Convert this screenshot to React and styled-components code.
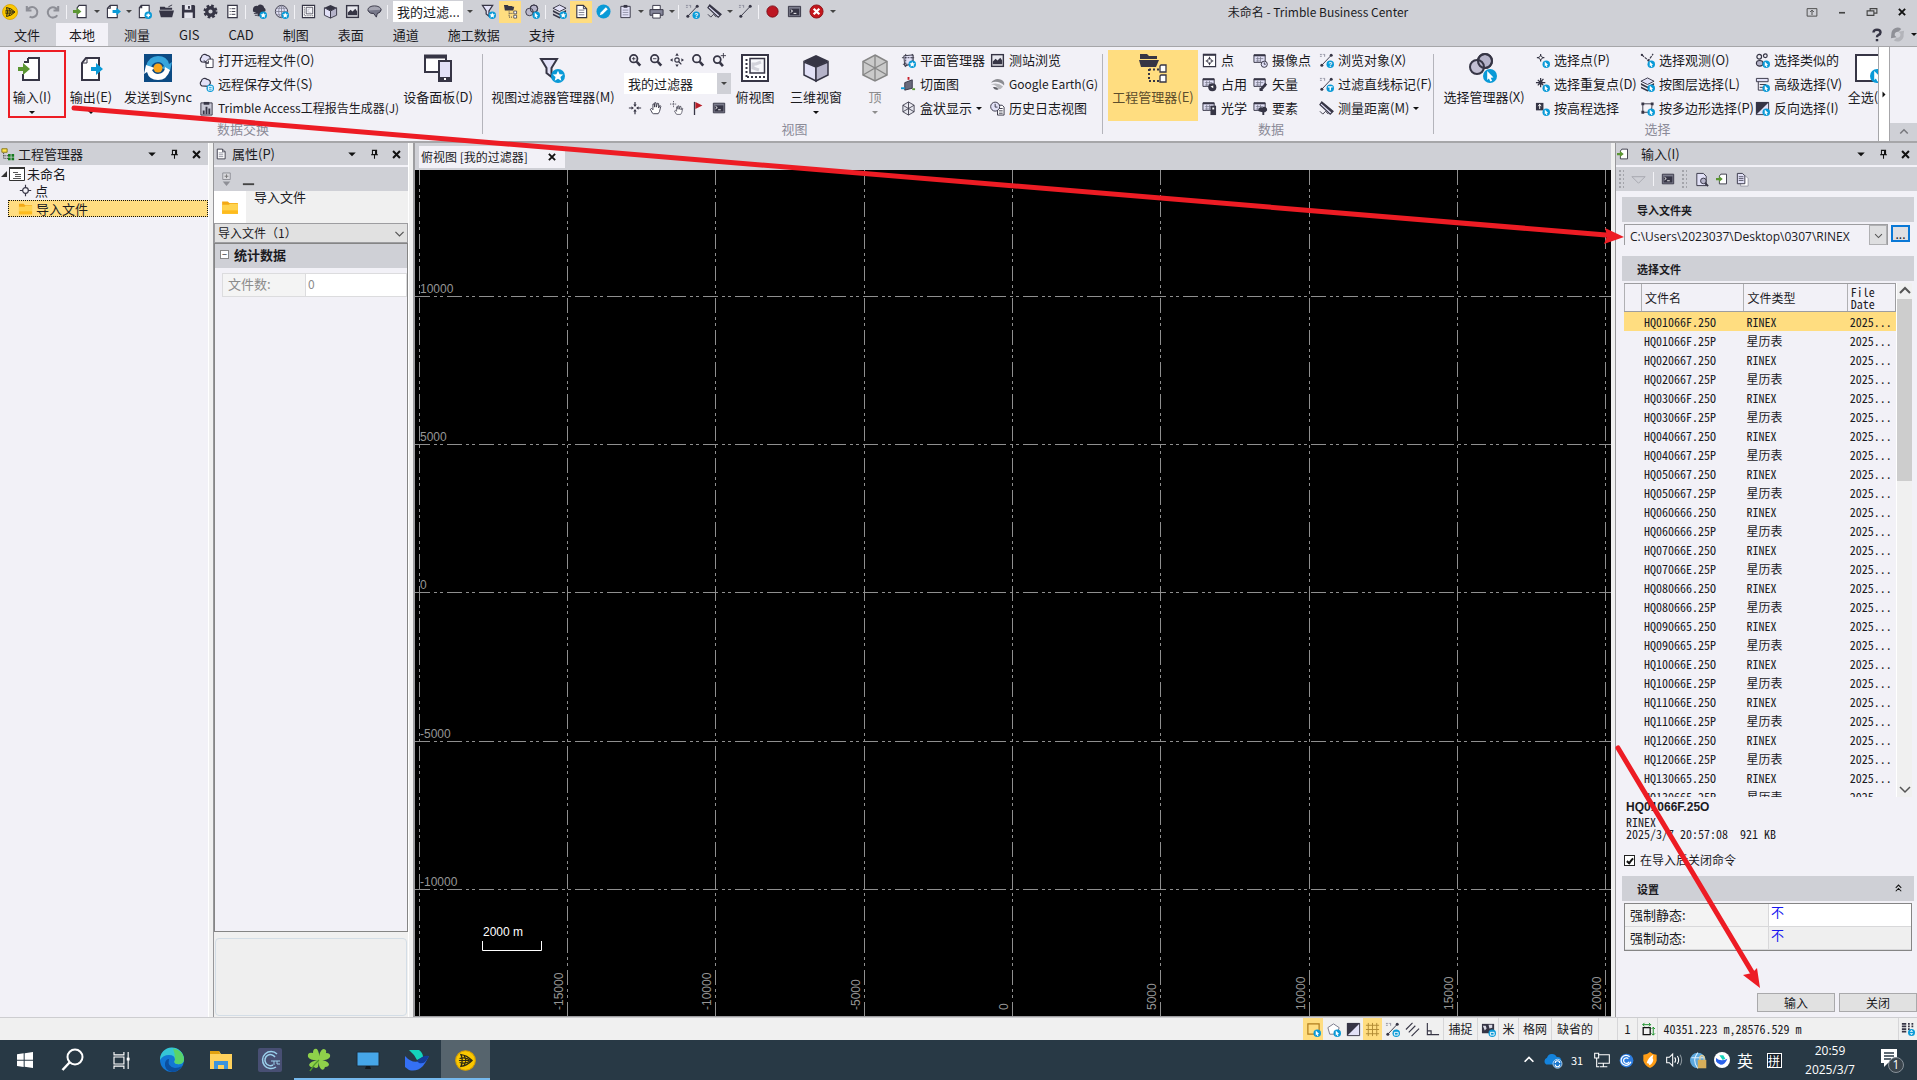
import React from "react";
import styled, { createGlobalStyle, css } from "styled-components";

const ui = `"Noto Sans CJK SC", "Noto Sans", sans-serif`;
const latin = `"Open Sans", "Noto Sans CJK SC", sans-serif`;
const mono = `"Noto Sans Mono CJK SC", "Liberation Mono", monospace`;
const D = "#363545";
const B = "#0a9ad7";
const L = "#e2e1f7";
const chrome = "#cfd0d6";
const pane = "#f2f1f7";

const Global = createGlobalStyle`
  *, *::before, *::after { box-sizing: border-box; }
  body { margin: 0; overflow: hidden; }
  button, input, select { font: inherit; color: inherit; margin: 0; }
  button { background: none; border: 0; padding: 0; }
`;

/* ---------- icons ---------- */

const Star = ({ x = 12, y = 12, r = 4 }) => (
  <g transform={`translate(${x} ${y}) scale(${r / 4})`}>
    <circle r="4" fill={B} />
    <path d="M0-3 .9-1 3-.8 1.4.6 1.9 2.7 0 1.6-1.9 2.7-1.4.6-3-.8-.9-1Z" fill="#fff" />
  </g>
);
const Cur = ({ x = 12, y = 12, r = 4 }) => (
  <g transform={`translate(${x} ${y}) scale(${r / 4})`}>
    <circle r="4" fill={B} />
    <path d="M-1.6-2.9 2 .8.4 1 1.2 2.7.2 3.1-.6 1.4-1.6 2.3Z" fill="#fff" />
  </g>
);
const Dot = ({ x = 12, y = 12, children }) => (
  <g transform={`translate(${x} ${y})`}>
    <circle r="4" fill={B} />
    {children || <path d="M-2 0H2M0-2V2" stroke="#fff" strokeWidth="1.4" />}
  </g>
);
const page = <path d="M4.500 1.500H13V14.500H2.500V4ZM5 1.500V4H2.500" fill="#fff" stroke={D} strokeWidth="1.200" />;
const box = (
  <>
    <path d="M8 1 14.500 4 8 7.500 1.500 4Z" fill={D} />
    <path d="M1.500 4 8 7.500V15L1.500 12Z" fill={L} stroke={D} />
    <path d="M14.500 4 8 7.500V15L14.500 12Z" fill="#b5b3c9" stroke={D} />
  </>
);
const lens = (
  <>
    <circle cx="6.500" cy="6.500" r="4.300" fill="none" stroke={D} strokeWidth="2" />
    <path d="m10 10 4 4.500" stroke={D} strokeWidth="3" />
  </>
);
const folderGold = (
  <>
    <path d="M1 3H6L7.500 4.500H15V14H1Z" fill="#f3a915" />
    <path d="M1 6H7L8 5H15V14H1Z" fill="#ffd34f" />
    <path d="M1 11H15V14H1Z" fill="#fdbb1e" />
  </>
);
const tableBit = (
  <>
    <path d="M1 2H13V10H1Z" fill={L} stroke={D} />
    <path d="M1 2.500H13" stroke={D} strokeWidth="2" />
    <path d="M3 6H11M3 8.500H8M5 4V10M8 4V10" stroke="#77788a" strokeWidth=".8" />
  </>
);
const tagLine = (
  <>
    <path d="M1 1.500H3M4 1.500H5M6 1V4M1 3.500H3" stroke="#77788a" strokeWidth=".8" />
    <path d="M3 13 12.500 3" stroke={D} strokeWidth="1" />
    <circle cx="3" cy="13" r="1.600" fill={D} />
    <circle cx="13" cy="2.500" r="1.600" fill={D} />
  </>
);
const shelf = (
  <>
    <path d="M8 1 15 4.500 8 8 1 4.500Z" fill={L} stroke={D} />
    <path d="M1 6.500 8 10 15 6.500V8.500L8 12 1 8.500Z M1 10 8 13.500 15 10V12L8 15.500 1 12Z" fill={D} />
  </>
);
const cloud = <path d="M3 9.500A3 3 0 0 1 2.500 4.500 3.500 3.500 0 0 1 8.500 2.500 3.500 3.500 0 0 1 12 7L10 10Z" fill={L} stroke={D} strokeWidth="1.300" />;
const measure = (
  <>
    <path d="M3 1 15 11 12 14 1 4Z" fill={L} stroke={D} strokeWidth="1.300" />
    <path d="M3 1 15 11 13.500 12.500 2 2.500Z" fill={D} />
    <path d="M1 11 4 14 7 11 10 14" fill="none" stroke={D} />
  </>
);
const term = (
  <>
    <path d="M1.500 2.500H14.500V13.500H1.500Z" fill="#7b7c8c" stroke={D} />
    <path d="M3 5H13V12H3Z" fill={D} />
    <path d="m4 6 2 1.500L4 9M7 10H10" stroke="#fff" fill="none" />
  </>
);
const rings = (
  <>
    <circle cx="9.500" cy="5" r="4" fill="#b5b3c9" stroke={D} />
    <circle cx="4.800" cy="8.500" r="4" fill="#b5b3c9" fillOpacity=".8" stroke={D} />
    <circle cx="9.500" cy="5" r="4" fill="none" stroke={D} />
  </>
);
const funnel = <path d="M1.500 1.500H12.500L8.500 7.500V13L5.500 10.500V7.500Z" fill={L} stroke={D} strokeWidth="1.300" />;
const picture = (
  <>
    <path d="M1 1H15V15H1Z" fill={D} />
    <path d="M2.500 2.500H13.500V13.500H2.500Z" fill="#e8e8ef" />
    <path d="M3 12V9L6 6 8 8 11 5 13 8V12Z" fill={D} />
  </>
);
const globe = (
  <>
    <circle cx="8" cy="8" r="6.500" fill={L} stroke={D} />
    <path d="M8 1.500V14.500M1.500 8H14.500M3 4.500H13M3 11.500H13" stroke="#77788a" strokeWidth=".8" />
    <ellipse cx="8" cy="8" rx="3" ry="6.500" fill="none" stroke="#77788a" strokeWidth=".8" />
  </>
);
const planView = (
  <>
    <path d="M1.500 1.500H14.500V14.500H1.500Z" fill="#fff" stroke={D} strokeWidth="1.200" />
    <path d="M3.500 3V13M4 12.500H13" stroke={D} strokeDasharray="1 1" />
    <path d="M5.500 3.500H12.500V10.500H5.500Z" fill="#f4f4f8" stroke={D} strokeWidth=".8" />
    <path d="M10 5 7.500 6V8.500L10.500 9" fill="none" stroke="#c8c8d2" />
  </>
);
const hand = <path d="M4 14 1.500 9.500 3 8.500 4.500 10V3.500L6 3.300 6.500 7V2L8 2 8.500 7 9.500 2.500 11 3V8L12.500 5 13.500 6 12 12 10.500 14.500H5Z" fill="#fff" stroke={D} />;
const crossArrows = (
  <>
    <path d="M8 1V6M8 10V15M1 8H6M10 8H15" stroke={D} strokeWidth="1.400" />
    <path d="M6 4H10L8 6.500ZM6 12H10L8 9.500ZM4 6V10L6.500 8ZM12 6V10L9.500 8Z" fill={D} />
  </>
);
const target = (
  <>
    <circle cx="8" cy="8" r="3.500" fill="none" stroke={D} strokeWidth="1.400" />
    <path d="M8 1V5M8 11V15M1 8H5M11 8H15" stroke={D} strokeWidth="1.400" />
  </>
);
const logoDisc = (
  <>
    <circle cx="8" cy="8" r="7.500" fill="#fbc800" stroke="#d79f00" strokeWidth=".8" />
    <path d="M4.500 3.500Q9 4 13 8 9 12 4.500 12.500 6.500 8 4.500 3.500Z" fill="none" stroke="#2a2613" strokeWidth="1" />
    <path d="M3.500 6.500Q8 5 12 8 8 11 3.500 9.500M7 4.500Q9.500 8 7 11.500M3 8H11" fill="none" stroke="#2a2613" strokeWidth=".8" />
  </>
);
const invert = (
  <>
    <path d="M1.500 1.500H14.500V14.500H1.500Z" fill={L} stroke={D} />
    <path d="M1 1H15L1 15Z" fill={D} />
  </>
);
const importPage = (
  <>
    <path d="M6.500 1.500H14V14.500H4.500V4Z" fill="#fff" stroke={D} strokeWidth="1.200" />
    <path d="M0 6.500H4V4L9 8 4 12V9.500H0Z" fill="#5b9632" />
  </>
);

const shapes = {
  logo: logoDisc,
  undo: <path d="M3 2V7H8M3.500 7A5.500 5.500 0 1 1 6 13.500" fill="none" stroke="#8d8e96" strokeWidth="2.200" />,
  redo: <path d="M13 2V7H8M12.500 7A5.500 5.500 0 1 0 12 12" fill="none" stroke="#8d8e96" strokeWidth="2.200" />,
  importPage,
  exportPage: (
    <>
      <path d="M4.500 1.500H12V14.500H1.500V4.500ZM4.500 1.500V4.500H1.500" fill="#fff" stroke={D} strokeWidth="1.200" />
      <path d="M7 6.500H11V4L16 8 11 12V9.500H7Z" fill={B} />
    </>
  ),
  newPage: <>{page}<Dot /></>,
  open: <><path d="M1 3H6L7 4H14V6H1Z" fill={D} /><path d="M0 7H16L14 14H2Z" fill={D} /><path d="M10 3 14 1" stroke={D} /></>,
  save: <><path d="M1 1H14L15 2V15H1Z" fill={D} /><path d="M4 1H11V6H4ZM3.500 9H12.500V15H3.500Z" fill="#e6e6ee" /><path d="M8.500 2V5" stroke={D} strokeWidth="2" /></>,
  gear: <><circle cx="8" cy="8" r="6" fill="none" stroke={D} strokeWidth="3" strokeDasharray="2.700 2" /><circle cx="8" cy="8" r="4" fill="none" stroke={D} strokeWidth="3.500" /></>,
  sheet: <><path d="M3 1.500H13V14.500H3Z" fill="#fff" stroke={D} strokeWidth="1.300" /><path d="M5 5H6M7 5H11M5 8H6M7 8H11M5 11H6M7 11H11" stroke={D} /></>,
  treeStar: <><path d="M1 6A4 4 0 0 1 6 2 4 4 0 0 1 13 4 3 3 0 0 1 14 8L10 9V13H6V10L1 8Z" fill={D} /><path d="M2 10H6M3 12H6" stroke={D} /><Star /></>,
  globeStar: <>{globe}<Star /></>,
  planView,
  box,
  picture,
  layer3d: <><ellipse cx="8" cy="6" rx="7" ry="4" fill="#a5a5b2" stroke={D} /><path d="M1 7Q3 11 7 10L10 14 11 10Q14 10 15 6" fill="#77788a" stroke={D} /></>,
  funnelStar: <>{funnel}<Star /></>,
  manager: <><path d="M1 1H5L6 2H10V3H12L11 7H2Z" fill={D} /><path d="M6.500 8V14H10M7 10H10" fill="none" stroke={D} strokeDasharray="1 1" /><path d="M11.500 7.500H14.500V10.500H11.500ZM11.500 12H14.500V15H11.500Z" fill="#fff" stroke={D} strokeWidth=".8" /></>,
  ringsCur: <>{rings}<Cur /></>,
  layersStar: <>{shelf}<Star /></>,
  note: <><path d="M3 1.500H10L13.500 5V14.500H3Z" fill="#fff" stroke={D} strokeWidth="1.200" /><path d="M10 1.500V5H13.500" fill="none" stroke={D} /><path d="M5 6.500H11M5 9H11M5 11.500H11" fill="none" stroke="#77788a" /></>,
  pencil: <><circle cx="8" cy="8" r="7.500" fill={B} /><path d="M4 12 5 9 10.500 3.500 12.500 5.500 7 11Z" fill="#fff" /></>,
  clipboard: <><path d="M3 2.500H13V14.500H3Z" fill={L} stroke={D} /><path d="M6 1H10V4H6Z" fill={D} /><path d="M5 6.500H11M5 9H11M5 11.500H11" stroke="#8f90a5" /></>,
  printer: <><path d="M4 1.500H12V6H4Z" fill="#fff" stroke={D} /><path d="M1 6H15V12H1Z" fill="#85869a" stroke={D} /><path d="M4 10H12V15H4Z" fill="#fff" stroke={D} /></>,
  lineAsk: <>{tagLine}<Dot><text y="3" fontSize="7" fontWeight="700" fill="#fff" textAnchor="middle" fontFamily="Liberation Sans">?</text></Dot></>,
  lineFilter: <>{tagLine}<Dot><path d="M-2.500-1.500H2.500M0-1.500V2.500" stroke="#fff" strokeWidth="1.500" /></Dot></>,
  measure,
  lineOnly: <>{tagLine}</>,
  record: <circle cx="8" cy="8" r="6" fill="#bd1622" stroke="#7c0d16" />,
  term,
  stop: <><circle cx="8" cy="8" r="7" fill="#c4161c" stroke="#8e1015" /><path d="m5 5 6 6M11 5l-6 6" stroke="#fff" strokeWidth="2.400" /></>,
  cloudOpen: <>{cloud}<path d="M10 6.500H15V15.500H7.500V9Z" fill="#fff" stroke={D} /><path d="M5 8 10 11M10 8V11H7" fill="none" stroke={D} /></>,
  cloudSave: <>{cloud}<Dot><path d="M-2-2H2V2H-2ZM-2 0H2" fill="none" stroke="#fff" /></Dot></>,
  report: <><path d="M2 2H14V15H2Z" fill="#c9c9d6" stroke={D} /><path d="M5 1H11V4H5Z" fill={D} /><path d="M5 14V10M8 14V6M11 14V8" stroke={D} strokeWidth="2" /></>,
  zoomIn: <>{lens}<path d="M4.500 6.500H8.500M6.500 4.500V8.500" stroke={D} /></>,
  zoomOut: <>{lens}<path d="M4.500 6.500H8.500" stroke={D} /></>,
  extents: <><path d="M8 0 10 3H6ZM8 16 10 13H6ZM0 8 3 6V10ZM16 8 13 6V10Z" fill={D} /><circle cx="8" cy="8" r="2.500" fill="none" stroke={D} strokeWidth="1.300" /><path d="m10 10 3 3" stroke={D} strokeWidth="1.500" /></>,
  lens,
  lensPlus: <><circle cx="6" cy="7.500" r="4" fill="none" stroke={D} strokeWidth="2" /><path d="m9 11 3.500 4" stroke={D} strokeWidth="3" /><path d="M13 0V6M10 3H16" stroke={D} /></>,
  center: crossArrows,
  hand,
  handPlus: <><g transform="translate(4 4) scale(.78)">{hand}</g><path d="M4 0V7M0 3.500H8" stroke={D} strokeDasharray="1 1" /></>,
  flag: <><path d="M4 1V16" stroke={D} strokeWidth="1.500" /><path d="M5 1 13 5 5 9Z" fill="#b81e28" /></>,
  planeStar: <><path d="M3 3 13 2V11L4 14Z" fill={L} stroke={D} /><path d="M1 5H14M2 12H12M5 1V15M12 1V10" stroke={D} strokeDasharray="2 1" /><Star /></>,
  section: <><path d="M4 6 12 3V12L4 14Z" fill="#696a7b" stroke={D} /><path d="M8 0V3" stroke="#c8202c" strokeWidth="2" /><path d="M0 12H4" stroke={B} strokeWidth="2" /><path d="M12 13H15" stroke="#5b9632" strokeWidth="2" /></>,
  cube: <path d="M8 1 14 4.500V11.500L8 15 2 11.500V4.500ZM2 4.500 8 8 14 4.500M8 8V15M8 1V8M2 11.500 8 8 14 11.500" fill="#e6e6ee" stroke={D} strokeWidth=".9" />,
  earth: <><path d="M1 6Q6 0 12 3 16 5 15 9 9 3 1 6Z" fill="#8c8d92" /><path d="M1 8Q8 5 14 10 12 13 9 13 7 8 1 8Z" fill="#b7b8bc" /><path d="M3 11Q7 10 9 13 6 15 3 11Z" fill="#5c5d63" /></>,
  history: <><path d="M8 4.500H13L15 6.500V15H8Z" fill="#fff" stroke={D} /><path d="M9.500 8H13.500M9.500 10.500H13.500M9.500 13H13.500" stroke={D} /><circle cx="5.500" cy="6" r="4.800" fill={L} stroke={D} /><path d="M5.500 3V6.500H8" fill="none" stroke={D} /></>,
  point: <><path d="M1.500 1.500H14.500V14.500H1.500Z" fill="#fff" stroke={D} strokeWidth="1.200" /><path d="M1 2H15" stroke={D} strokeWidth="2" /><path d="M8 5 11 8.500 8 12 5 8.500Z" fill="none" stroke={D} /><path d="M8 4V7M8 10V13M4 8.500H7M9 8.500H12" stroke={D} /></>,
  occupy: <>{tableBit}<circle cx="11" cy="11" r="4.300" fill={D} /><path d="m9 10 3-1v3Z" fill="#fff" /></>,
  optic: <>{tableBit}<path d="M9 5H15V15H9Z" fill={D} /><path d="M11 7H13V9H11Z" fill="#fff" /></>,
  camera: <>{tableBit}<circle cx="12" cy="12" r="3.300" fill={L} stroke={D} /><path d="M12 10V12H13.500" fill="none" stroke={D} /></>,
  vector: <>{tableBit}<path d="M8 14 14 7" stroke={D} strokeWidth="3" /><path d="M7 15V11L11 15Z" fill={D} /></>,
  feature: <>{tableBit}<path d="M6 11A3 3 0 0 1 10 7 3 3 0 0 1 15 10L13 12H12V15H10V12Z" fill={D} /></>,
  selPoint: <><path d="M6 1V9M2 5H10" stroke={D} strokeWidth="1.300" /><circle cx="6" cy="5" r="1.800" fill="#fff" stroke={D} /><Cur /></>,
  selDup: <><path d="M6 1V11M1 6H11M3 3 9 9M9 2 3 9" stroke={D} strokeWidth="1.300" /><circle cx="6" cy="6" r="2.200" fill={D} /><Cur /></>,
  selElev: <><path d="M1 2H9V10H1Z" fill={D} /><path d="M5 3.500V8.500M3.500 5.500 5 3.500 6.500 5.500" fill="none" stroke="#fff" /><Cur /></>,
  selObs: <><path d="M2 2 9 8 14 1" fill="none" stroke={D} strokeWidth="1.200" strokeDasharray="3 1" /><circle cx="2" cy="2" r="1.200" fill={D} /><circle cx="9" cy="8" r="1.200" fill={D} /><Cur /></>,
  selLayer: <>{shelf}<Cur /></>,
  selPoly: <><path d="M3 3H13L12 12H3Z" fill="none" stroke={D} /><path d="M1.500 1.500H4.500V4.500H1.500ZM11.500 1.500H14.500V4.500H11.500ZM1.500 10.500H4.500V13.500H1.500Z" fill={D} /><Cur /></>,
  selSame: <><circle cx="4.500" cy="4" r="2.500" fill="none" stroke={D} strokeWidth="1.300" /><circle cx="11" cy="3" r="2" fill="none" stroke={D} strokeWidth="1.300" /><ellipse cx="5" cy="11" rx="3.500" ry="3" fill="#b5b3c9" stroke={D} strokeWidth="1.300" /><Cur /></>,
  selAdv: <><path d="M1.500 1.500H14V5H1.500Z" fill={L} stroke={D} /><path d="M3.500 5V14H10M5 8H12M5 11H9" fill="none" stroke={D} /><Cur /></>,
  selInv: <>{invert}<Cur /></>,
  invert,
  gold: folderGold,
  projectTree: <><path d="M1 2H7V6H1Z" fill="#ffe34d" stroke="#80700c" /><path d="M3 7V13H8M3 10H8" fill="none" stroke="#222" strokeDasharray="1 1" /><path d="M8 8H11V11H8ZM12 8H15V11H12ZM8 12H11V15H8ZM12 12H15V15H12Z" fill="#157a1c" /></>,
  listBox: <><path d="M.5 1.500H15.500V14.500H.5Z" fill="#fff" stroke="#333" /><path d="M0 2H16" stroke="#333" strokeWidth="2" /><path d="M4 6.500H9M6 8.500H12M6 10.500H12M4 12.500H12" stroke="#555" /></>,
  target,
  pin: <path d="M5 2H11V8H5ZM9.500 2V8M3 8.500H13M8 9V14" fill="none" stroke="#111" strokeWidth="1.500" />,
  close: <path d="m3 3 10 10M13 3 3 13" stroke="#111" strokeWidth="3" />,
  down: <path d="M3 6H13L8 11Z" fill="#111" />,
  chevDown: <path d="m3 6 5 5 5-5" fill="none" stroke="#555" strokeWidth="1.500" />,
  chevUp: <path d="m3 10 5-5 5 5" fill="none" stroke="currentColor" strokeWidth="2" />,
  twoUp: <path d="m4 7 4-4 4 4M4 12l4-4 4 4" fill="none" stroke="#111" strokeWidth="1.500" />,
  filterGhost: <path d="M1 5H15L8 12Z" fill="none" stroke="#a5a6ae" />,
  pageLens: <><path d="M3 1.500H10L13 4.500V14.500H3Z" fill={L} stroke={D} /><circle cx="10" cy="9.500" r="3" fill="#b5b3c9" stroke={D} /><path d="m12 12 3 3" stroke={D} strokeWidth="2" /></>,
  copy: <><path d="M6 4H11L14 7V15H6Z" fill="#fff" stroke="#9a9ba8" /><path d="M2.500 1.500H8L10.500 4V12.500H2.500Z" fill={L} stroke={D} /><path d="M4 5H9M4 7H9M4 9H9" stroke={D} strokeWidth=".8" /></>,
  restoreUp: <><path d="M1.500 3.500H14.500V13.500H1.500Z" fill="none" stroke="#444" strokeWidth="1.200" /><path d="M8 12V6M5.500 8 8 5.500 10.500 8" fill="none" stroke="#444" strokeWidth="1.200" /></>,
  minimize: <path d="M4 9H12" stroke="#444" strokeWidth="2.200" />,
  dash: <path d="M2 13H14" stroke="#444" strokeWidth="2" />,
  restore: <path d="M5.500 6V3.500H14.500V9.500H11M1.500 6.500H10.500V12.500H1.500Z" fill="none" stroke="#444" strokeWidth="1.500" />,
  help: <path d="M4 5Q4 2 8 2T12 5Q12 7 9.500 8 8 8.700 8 10.500M8 12.500V15" fill="none" stroke={D} strokeWidth="2.800" />,
  sync: <><path d="M1.500 7A6.500 6.500 0 0 1 12 2L9 5A3.500 3.500 0 0 0 5 9L7 11 1 12Z" fill="#8f9097" /><path d="M14.500 8A6.500 6.500 0 0 1 4 14L7 11.500A3.500 3.500 0 0 0 11 7L9 5 15 4Z" fill="#b3b4ba" /></>,
  snapBox: <><path d="M2 2H14V13H2Z" fill="none" stroke="#b07d1e" strokeWidth="1.300" /><Cur /></>,
  snapPoly: <><path d="M8 2 14 6 12 13H4L2 6Z" fill="#fff" stroke="#77788a" /><Cur /></>,
  grid: <path d="M1 3.500H15M1 8H15M1 12.500H15M3.500 1V15M8 1V15M12.500 1V15" stroke="#b08a33" strokeWidth="1" />,
  lineEye: <>{tagLine}<Dot><path d="M-2-1H2V2H-2Z" fill="none" stroke="#fff" /></Dot></>,
  slopes: <path d="M1 8 8 1M7 15 15 7M4 11 11 4" stroke={D} strokeWidth="1.200" />,
  ortho: <path d="M2.500 1V13.500H15M2.500 9.500H6.500V13.500" fill="none" stroke={D} strokeWidth="1.200" />,
  world: <><path d="M1 2H14V12H1Z" fill={D} /><path d="M2 4 5 4 6 7 4 9ZM8 3H12V6L9 7Z" fill="#d9d9e4" /><Dot><path d="M-2-1H2V2H-2Z" fill="none" stroke="#fff" /></Dot></>,
  boxDims: <><path d="M2.500 6.500H10.500V14.500H2.500Z" fill="none" stroke="#111" strokeWidth="1.500" /><path d="M2 3H11M4 1 2 3 4 5M9 1 11 3 9 5M14 6V15M12 8 14 6 16 8M12 13 14 15 16 13" fill="none" stroke="#0b8a1c" /></>,
  listGear: <><path d="M1 2H6M1 5H6M1 8H6M1 11H6M8 2H10M8 5H10M12 2H14M12 5H14M8 8H10" stroke={D} strokeWidth="2" /><Dot><path d="M-2-.8 0-2.800 2-.8ZM-2 .8 0 2.800 2 .8Z" fill="#fff" /></Dot></>,
  toggle: <><path d="M4 1H12V8H4Z" fill="#d8d8dc" stroke="#8e8f96" /><path d="M8 2.500V6.500M6 4.500H10" stroke="#777" /><path d="M4 10H12L8 15Z" fill="#8e8f96" /></>,
};

const large = {
  importPage: <><path d="M11.500 3H21V26.500H5.500V9" fill="#fff" /><path d="M10 4H21V26H5V20M10 4V8H6" fill="none" stroke={D} strokeWidth="2" /><path d="M0 13H5V9L12 15 5 21V17H0Z" fill="#5b9632" /></>,
  exportPage: <><path d="M9 4H22V26H5V9Z" fill="#fff" stroke={D} strokeWidth="2" /><path d="M10 4V9H5" fill="none" stroke={D} /><path d="M14 13H19V9L26 15 19 21V17H14Z" fill={B} /></>,
  syncBig: <><path d="M0 0H28V28H0Z" fill="#0c4a83" /><path d="M2 12Q5 2 14 2 23 2 25 10L28 8 26 17 17 14 20 12Q18 8 14 8 7 9 7 15Z" fill="#37a5dc" /><path d="M26 16Q23 26 14 26 5 26 3 18L0 20 2 11 11 14 8 16Q10 20 14 20 21 19 21 13Z" fill="#fff" /><circle cx="14" cy="14" r="4.500" fill="#f7a51c" /></>,
  devices: <><path d="M1 3H22V18H1Z" fill="#fff" stroke={D} strokeWidth="2" /><path d="M0 2.500H23" stroke={D} strokeWidth="4" /><path d="M15 7H27V27H15Z" fill={L} stroke={D} strokeWidth="2" /><path d="M15 25H27" stroke={D} strokeWidth="4" /><path d="M20 25H22" stroke="#fff" strokeWidth="2" /></>,
  funnelBig: <><path d="M2 5H18L12.500 14V23L7.500 19V14Z" fill={L} stroke={D} strokeWidth="2" /><Star x={19} y={22} r={7} /></>,
  planBig: <><path d="M1 1H27V27H1Z" fill="#fff" stroke={D} strokeWidth="2" /><path d="M5.500 5V24M6 23H24" stroke={D} strokeWidth="2" strokeDasharray="2 2" /><path d="M9 4.500H23.500V19H9Z" fill="#f7f7fb" stroke={D} strokeWidth="1.500" /><path d="M20 8 15 10H12V14L18 16" fill="none" stroke="#d2d2da" strokeWidth="3" /></>,
  boxBig: <><path d="M14 1 27 7 14 13 1 7Z" fill={D} /><path d="M2 8 14 13V27L2 21Z" fill={L} stroke={D} strokeWidth="1.500" /><path d="M26 8 14 13V27L26 21Z" fill="#b5b3c9" stroke={D} strokeWidth="1.500" /></>,
  cubeBig: <><path d="M14 1 26 7.500V21L14 27 2 21V7.500Z" fill="#cacaca" stroke="#868686" strokeWidth="1.500" /><path d="M2 7.500 14 14 26 7.500M14 14V27M14 1V14M2 21 14 14 26 21" fill="none" stroke="#868686" strokeWidth="1.300" /></>,
  managerBig: <><path d="M1 0H8L10 2H18V5H1Z" fill={D} /><path d="M0 6H20L17 13H2Z" fill={D} /><path d="M10 15.500H20M10 15V27H20" fill="none" stroke={D} strokeWidth="2" strokeDasharray="2 2" /><path d="M22 11H27V18H21V12ZM22 21H27V28H21V22Z" fill="#fff" stroke={D} strokeWidth="1.300" /></>,
  ringsBig: <><circle cx="15" cy="7" r="7" fill="#b5b3c9" stroke={D} strokeWidth="2" /><circle cx="7" cy="13" r="7" fill="#b5b3c9" fillOpacity=".8" stroke={D} strokeWidth="2" /><circle cx="15" cy="7" r="7" fill="none" stroke={D} strokeWidth="2" /><Cur x={20} y={22} r={7} /></>,
  allBig: <><path d="M1 1H29V27H1Z" fill="#fff" stroke={D} strokeWidth="2" /><Cur x={22} y={22} r={7} /></>,
};

const Svg = styled.svg`
  display: block;
  flex: none;
  overflow: visible;
`;
const Icon = ({ n, s = 15 }) => <Svg width={s} height={s} viewBox="0 0 16 16" aria-hidden="true">{shapes[n]}</Svg>;
const BigIcon = ({ n }) => <Svg width="28" height="28" viewBox="0 0 28 28" aria-hidden="true">{large[n]}</Svg>;
const Caret = styled.span`
  width: 0;
  height: 0;
  border: 3px solid transparent;
  border-top-color: ${(p) => p.$c || "#111"};
  border-bottom-width: 0;
  flex: none;
`;

/* ---------- window frame ---------- */

const Window = styled.div`
  position: relative;
  height: 100vh;
  display: flex;
  flex-direction: column;
  overflow: hidden;
  background: ${chrome};
  color: #1b1b1f;
  font: 13px/16px ${ui};
  white-space: nowrap;
`;
const TitleBar = styled.header`
  height: 23px;
  display: flex;
  align-items: center;
`;
const ToolButton = styled.button`
  width: ${(p) => p.$w || 22}px;
  height: 22px;
  flex: none;
  display: grid;
  place-items: center;
  background: ${(p) => (p.$on ? "#ffdd80" : "none")};
`;
const ToolGap = styled.span`
  flex: none;
  width: 1px;
  height: 14px;
  margin: 0 2px;
  background: #f2f2f6;
`;
const TopSelect = styled.select`
  width: 70px;
  height: 21px;
  margin-left: 3px;
  padding: 0 4px;
  border: 0;
  appearance: none;
  background: #fff;
`;
const Title = styled.h1`
  flex: 1;
  margin: 0;
  text-align: center;
  font: 12px/16px ${ui};
`;
const TabBar = styled.nav`
  height: 23px;
  display: flex;
  gap: 3px;
  padding-left: 1px;
`;
const Tab = styled.button`
  padding: 0 13px;
  background: ${(p) => (p.$on ? pane : "none")};
`;
const TabEnd = styled.div`
  margin-left: auto;
  display: flex;
  align-items: center;
  gap: 6px;
`;

/* ---------- ribbon ---------- */

const Ribbon = styled.section`
  height: 97px;
  display: flex;
  border-top: 1px solid #a6a6a9;
  border-bottom: 2px solid #a6a6a9;
  background: ${pane};
`;
const Group = styled.div`
  position: relative;
  flex: ${(p) => (p.$w ? `0 0 ${p.$w}px` : "1 1 0")};
  min-width: 0;
  padding: 3px 0 0 ${(p) => p.$pad || 3}px;
  overflow: hidden;
  &::after {
    content: "";
    position: absolute;
    right: 0;
    top: 7px;
    height: 80px;
    border-right: ${(p) => (p.$last ? 0 : 1)}px solid #b4b4bb;
  }
`;
const GroupRow = styled.div`
  height: 71px;
  display: flex;
`;
const GroupName = styled.div`
  text-align: center;
  color: #8b8b98;
`;
const Big = styled.button`
  flex: none;
  width: ${(p) => p.$w}px;
  height: 71px;
  padding-top: 4px;
  display: flex;
  flex-direction: column;
  align-items: center;
  gap: 7px;
  background: ${(p) => (p.$on ? "#ffdd80" : "none")};
  color: ${(p) => (p.$dim ? "#8d8d8d" : p.$on ? "#5c4d2c" : "inherit")};
  ${Caret} { margin-top: -1px; }
`;
const Stack = styled.div`
  flex: none;
  width: ${(p) => p.$w}px;
  margin-top: -2px;
  padding-left: 4px;
  display: grid;
  grid-template-rows: repeat(3, 24px);
`;
const Small = styled.button`
  display: flex;
  align-items: center;
  gap: 4px;
  text-align: left;
  font-size: ${(p) => (p.$latin ? 12 : 13)}px;
`;
const IconLine = styled.div`
  display: flex;
  align-items: center;
`;
const Combo = styled.div`
  width: 107px;
  height: 21px;
  margin-top: 1px;
  display: flex;
  align-items: center;
  background: #fff;
  select {
    flex: 1;
    width: 90px;
    height: 21px;
    padding: 0 4px;
    border: 0;
    appearance: none;
    background: transparent;
  }
  span.end {
    width: 14px;
    height: 21px;
    display: grid;
    place-items: center;
    background: ${chrome};
  }
`;
const Scroller = styled.button`
  width: 12px;
  display: grid;
  place-items: center;
  background: #fff;
  border: 1px solid #a6a6a9;
  border-width: 0 1px;
  ${Caret} { transform: rotate(-90deg); }
`;
const RibbonEnd = styled.div`
  width: 27px;
  display: flex;
  align-items: flex-end;
  button {
    width: 27px;
    height: 18px;
    display: grid;
    place-items: center;
    background: ${chrome};
    color: #77777c;
  }
`;

/* ---------- panels ---------- */

const Main = styled.main`
  flex: 1;
  min-height: 0;
  display: grid;
  grid-template-columns: 209px 196px minmax(0, 1fr) 302px;
  column-gap: 4px;
  background: #f0f0f0;
`;
const Panel = styled.section`
  min-width: 0;
  min-height: 0;
  display: flex;
  flex-direction: column;
  background: ${(p) => p.$bg || pane};
  border-left: ${(p) => (p.$edge ? 1 : 0)}px solid #97979a;
  border-right: ${(p) => (p.$flat ? 0 : 1)}px solid #fff;
`;
const PanelHead = styled.header`
  flex: none;
  height: 22px;
  display: flex;
  align-items: center;
  gap: 3px;
  padding: 0 5px 0 1px;
  background: ${chrome};
  h2 {
    margin: 0;
    padding: 0 0 1px ${(p) => p.$in || 0}px;
    flex: 1;
    font: 13px/16px ${ui};
  }
  button {
    width: 14px;
    margin-left: 5px;
    display: grid;
    place-items: center;
  }
`;
const Strip = styled.div`
  flex: none;
  height: 24px;
  margin-top: 2px;
  display: flex;
  align-items: center;
  gap: 7px;
  padding-left: ${(p) => p.$pad || 3}px;
  background: ${chrome};
`;
const Grip = styled.span`
  width: 5px;
  height: 19px;
  background: radial-gradient(circle at 1px 1px, #a3a4aa 1px, transparent 1px) 0 0 / 4px 4px;
`;
const Bar = styled.span`
  width: 1px;
  height: 14px;
  background: #f2f2f6;
`;
const Tree = styled.ul`
  margin: 0;
  padding: 0 0 0 8px;
  list-style: none;
`;
const TreeItem = styled.li`
  display: flex;
  align-items: center;
  gap: ${(p) => (p.$in ? 3 : 2)}px;
  height: 17px;
  padding-left: ${(p) => p.$in || 0}px;
  line-height: 16px;
  &:last-child { margin-top: 1px; }
  ${(p) =>
    p.$on &&
    css`
      background: #ffdd80;
      outline: 1px dotted #111;
      outline-offset: -1px;
    `}
`;
const Twist = styled.span`
  width: 0;
  height: 0;
  margin-left: -7px;
  border: 3px solid transparent;
  border-right-color: #333;
  border-bottom-color: #333;
`;
const ObjectHead = styled.div`
  flex: none;
  height: 32px;
  display: flex;
  gap: 8px;
  background: #f0f0f0;
  line-height: 12px;
  div {
    width: 32px;
    display: grid;
    place-items: center;
    background: #fff;
  }
`;
const PlainSelect = styled.div`
  flex: none;
  height: 20px;
  display: flex;
  align-items: center;
  padding-right: 1px;
  border: 1px solid #9d9da0;
  background: #e1e1e1;
  select {
    flex: 1;
    height: 18px;
    padding: 0 3px;
    border: 0;
    appearance: none;
    background: transparent;
    font: 12px/16px ${ui};
  }
`;
const PropGrid = styled.div`
  flex: 1;
  border: 1px solid #858585;
  header {
    height: 24px;
    display: flex;
    align-items: center;
    gap: 5px;
    padding: 0 0 3px 5px;
    background: ${chrome};
    font-weight: 700;
    line-height: 16px;
  }
  header button {
    width: 9px;
    height: 9px;
    display: grid;
    place-items: center;
    border: 1px solid #888;
    background: #fff;
    font: 9px/7px ${ui};
  }
  label {
    height: 24px;
    margin: 5px 0 0 7px;
    display: grid;
    grid-template-columns: 77px 1fr;
    border: 1px solid #dcdcde;
    color: #8b8b8b;
    background: #f4f4f4;
    line-height: 19px;
    padding-left: 5px;
  }
  input {
    width: 100%;
    min-width: 0;
    padding: 0 2px 3px;
    border: 0;
    border-left: 1px solid #dcdcde;
    background: #fff;
    font-size: 12px;
  }
`;
const HelpBox = styled.div`
  flex: none;
  height: 78px;
  margin: 6px 1px 1px;
  border: 1px solid #d3dde6;
  border-radius: 4px;
  background: #efefef;
`;
const HelpWrap = styled.div`
  flex: none;
  background: #f0f0f0;
`;

/* ---------- drawing view ---------- */

const View = styled.section`
  min-width: 0;
  min-height: 0;
  display: flex;
  flex-direction: column;
  border-left: 2px solid #9d9da0;
  border-bottom: 1px solid #9d9da0;
  background: ${chrome};
`;
const ViewTabs = styled.div`
  height: 27px;
  padding: 3px 0 2px 4px;
  display: flex;
`;
const ViewTab = styled.button`
  width: 146px;
  padding: 0 8px 0 2px;
  display: flex;
  align-items: center;
  justify-content: space-between;
  background: ${pane};
  font-size: 12px;
`;
const Plan = styled.svg`
  flex: 1;
  min-height: 0;
  width: 100%;
  display: block;
  background: #000;
  font: 12px "Liberation Sans", sans-serif;
  fill: #969696;
`;

/* ---------- import panel ---------- */

const Section = styled.h3`
  flex: none;
  height: 25px;
  margin: ${(p) => p.$top}px 3px 0 6px;
  padding: 0 10px 0 15px;
  display: flex;
  align-items: center;
  justify-content: space-between;
  background: ${chrome};
  font: 700 11px/16px ${ui};
`;
const PathRow = styled.div`
  flex: none;
  margin: 2px 7px 0 8px;
  display: flex;
  align-items: flex-start;
  gap: 3px;
`;
const PathCombo = styled.div`
  flex: 1;
  height: 21px;
  display: flex;
  border: 1px solid #9d9da0;
  border-bottom: 0;
  select {
    flex: 1;
    min-width: 0;
    padding: 3px 5px 0;
    border: 0;
    appearance: none;
    background: transparent;
    font: 12px/16px ${latin};
  }
  span {
    width: 18px;
    display: grid;
    place-items: center;
    border: 1px solid #b0b0b3;
    background: #dedee0;
  }
`;
const Browse = styled.button`
  width: 19px;
  height: 17px;
  margin-top: 1px;
  border: 2px solid #0a78d6;
  background: #dfdfe3;
  font: 12px/12px ${ui};
`;
const Files = styled.div`
  flex: none;
  height: 514px;
  margin: 2px 5px 0 8px;
  display: flex;
  overflow: hidden;
`;
const FileTable = styled.table`
  flex: 1;
  align-self: flex-start;
  table-layout: fixed;
  border-collapse: separate;
  border-spacing: 0;
  font: 12px/16px ${ui};
  th {
    height: 29px;
    padding: 0 4px;
    text-align: left;
    font-weight: 400;
    line-height: 12px;
    border: 1px solid #9d9da0;
    border-width: 1px 0;
    box-shadow: inset 1px 0 #b0b0b3;
  }
  th:last-child {
    border-right-width: 1px;
    font: 12px/12px ${mono};
  }
  td {
    height: 19px;
    padding: 0 2px 0 3px;
  }
`;
const Code = styled.span`
  font: 12px/12px ${mono};
`;
const FileRow = styled.tr`
  background: ${(p) => (p.$on ? "#ffdd80" : "none")};
`;
const ScrollBar = styled.div`
  width: 16px;
  display: flex;
  flex-direction: column;
  align-items: center;
  justify-content: space-between;
  background: #f0f0f0;
  color: #555;
  border-left: 1px solid #fff;
  span {
    height: 182px;
    width: 100%;
    background: #cdcdcd;
    margin-bottom: auto;
  }
`;
const FileInfo = styled.div`
  flex: none;
  height: 44px;
  padding: 1px 0 0 10px;
  display: flex;
  flex-direction: column;
  font: 12px/12px ${mono};
  strong {
    font: 700 12px/18px "Liberation Sans", sans-serif;
  }
  span { white-space: pre; }
`;
const CloseAfter = styled.label`
  flex: none;
  height: 34px;
  padding: 4px 0 0 8px;
  display: flex;
  align-items: center;
  gap: 5px;
  font-size: 12px;
  input {
    width: 11px;
    height: 11px;
    appearance: none;
    display: grid;
    place-items: center;
    border: 1px solid #222;
    background: #fff;
  }
  input:checked::after {
    content: "";
    width: 4px;
    height: 7px;
    border: solid #111;
    border-width: 0 2px 2px 0;
    transform: rotate(40deg);
  }
`;
const Settings = styled.table`
  flex: none;
  margin: 2px 5px 0 8px;
  border: 1px solid #858585;
  border-collapse: separate;
  border-spacing: 0;
  table-layout: fixed;
  th, td {
    width: 50%;
    height: 23px;
    padding: 0 5px;
    text-align: left;
    font-weight: 400;
    border-bottom: 1px solid #d8d8da;
    background: #f3f3f3;
  }
  td {
    padding: 0 2px;
    border-left: 1px solid #d8d8da;
    color: #1616f0;
    background: #fff;
    line-height: 16px;
    vertical-align: top;
  }
  tr + tr td { background: #efefef; }
`;
const Actions = styled.footer`
  margin-top: auto;
  padding-bottom: 5px;
  display: flex;
  justify-content: flex-end;
  gap: 4px;
  button {
    width: 78px;
    height: 19px;
    border: 1px solid #a9a9ab;
    background: #e1e1e1;
    font-size: 12px;
  }
`;

/* ---------- status bar and taskbar ---------- */

const Status = styled.footer`
  height: 23px;
  flex: none;
  display: flex;
  align-items: stretch;
  justify-content: flex-end;
  border-top: 1px solid #cdcdd0;
  background: #f0f0f0;
  font-size: 12px;
`;
const Cell = styled.div`
  width: ${(p) => p.$w}px;
  display: flex;
  align-items: center;
  justify-content: center;
  background: ${(p) => (p.$on ? "#ffdd80" : "none")};
  border-left: ${(p) => (p.$line ? 1 : 0)}px solid #d6d6d8;
  font-family: ${(p) => (p.$mono ? mono : ui)};
`;
const Taskbar = styled.nav`
  height: 40px;
  flex: none;
  display: flex;
  background: #283945;
  color: #fff;
`;
const TaskButton = styled.button`
  width: 49px;
  display: grid;
  place-items: center;
  background: ${(p) => (p.$on ? "#56646d" : "none")};
  box-shadow: ${(p) => (p.$run ? "inset 0 -2px #76b9ed" : "none")};
`;
const Tray = styled.div`
  margin-left: auto;
  display: flex;
  align-items: center;
`;
const TrayItem = styled.button`
  width: ${(p) => p.$w || 24}px;
  height: 40px;
  display: grid;
  place-items: center;
  font-size: ${(p) => p.$f || 11}px;
`;
const Clock = styled.time`
  width: 76px;
  text-align: center;
  font: 12px/19px ${latin};
`;
const Pinyin = styled.span`
  width: 15px;
  height: 15px;
  border: 1px solid #fff;
  background: #15202a;
  font-size: 12px;
  line-height: 13px;
`;

const Marks = styled.svg`
  position: absolute;
  left: 0;
  top: 0;
  width: 1917px;
  height: 1080px;
  pointer-events: none;
`;

/* ---------- data ---------- */

const quick = [
  "undo", "redo", "|", "importPage", "v11", "exportPage", "v9", "newPage", "open", "save", "gear", "sheet", "|",
  "treeStar", "globeStar", "|", "planView", "box", "picture", "layer3d", "|", "combo", "v14", "funnelStar",
  "*manager", "ringsCur", "|", "layersStar", "*note", "pencil", "clipboard", "v9", "printer", "v9", "|",
  "lineAsk", "measure", "v9", "lineOnly", "|", "record", "term", "stop", "v12",
];
const tabs = ["文件", "本地", "测量", "GIS", "CAD", "制图", "表面", "通道", "施工数据", "支持"];
const stations = [
  "HQ01066F", "HQ020667", "HQ03066F", "HQ040667", "HQ050667", "HQ060666", "HQ07066E",
  "HQ080666", "HQ090665", "HQ10066E", "HQ11066E", "HQ12066E", "HQ130665",
];
const files = stations.flatMap((s) => [[`${s}.25O`, "RINEX"], [`${s}.25P`, "星历表"]]);
const xs = [4, 152, 300, 449, 597, 745, 894, 1042, 1190];
const xLabels = ["", "-15000", "-10000", "-5000", "0", "5000", "10000", "15000", "20000"];
const ys = [126, 274, 422, 571, 719];
const yLabels = ["10000", "5000", "0", "-5000", "-10000"];

const BigBtn = ({ n, w, label, caret, ...r }) => (
  <Big $w={w} {...r}>
    <BigIcon n={n} />
    <span>{label}</span>
    {caret && <Caret $c={r.$dim && "#8d8d8d"} />}
  </Big>
);
const Rows = ({ w, items }) => (
  <Stack $w={w}>
    {items.map(([n, t, caret]) => (
      <Small key={t} $latin={/^[A-Z]/.test(t)}>
        <Icon n={n} />
        {t}
        {caret && <Caret />}
      </Small>
    ))}
  </Stack>
);
const HeadButtons = () => (
  <>
    <button aria-label="选项"><Icon n="down" s={12} /></button>
    <button aria-label="固定"><Icon n="pin" s={11} /></button>
    <button aria-label="关闭"><Icon n="close" s={11} /></button>
  </>
);

function Quick() {
  return quick.map((k, i) => {
    if (k === "|") return <ToolGap key={i} />;
    if (k === "combo") return <TopSelect key={i} aria-label="过滤器"><option>我的过滤...</option></TopSelect>;
    if (/^v\d/.test(k)) return <ToolButton key={i} $w={+k.slice(1)} aria-label="更多"><Caret $c="#444" /></ToolButton>;
    const on = k[0] === "*";
    const n = on ? k.slice(1) : k;
    return <ToolButton key={i} $on={on} aria-label={n}><Icon n={n} /></ToolButton>;
  });
}

function PlanView() {
  return (
    <Plan role="img" aria-label="俯视图">
      <g stroke="#8f8f8f" strokeDasharray="15 4 3 3 3 4" shapeRendering="crispEdges">
        {xs.map((x) => <line key={x} x1={x + 0.5} x2={x + 0.5} y1="0" y2="100%" />)}
        {ys.map((y) => <line key={y} x1="0" x2="100%" y1={y + 0.5} y2={y + 0.5} />)}
      </g>
      {ys.map((y, i) => <text key={y} x="5" y={y - 3}>{yLabels[i]}</text>)}
      <svg y="100%" overflow="visible">
        {xs.map((x, i) => <text key={x} transform={`translate(${x - 4} -6) rotate(-90)`}>{xLabels[i]}</text>)}
        <text x="68" y="-80" fill="#fff">2000 m</text>
        <path d="M67.500-75V-65.500H126.500V-75" fill="none" stroke="#fff" />
      </svg>
    </Plan>
  );
}

const TaskIcon = ({ children, s = 24 }) => <Svg width={s} height={s} viewBox="0 0 24 24" aria-hidden="true">{children}</Svg>;

export default function App() {
  return (
    <Window>
      <Global />
      <TitleBar>
        <ToolButton $w={20} aria-label="程序菜单"><Icon n="logo" s={16} /></ToolButton>
        <Quick />
        <Title>未命名 - Trimble Business Center</Title>
        {["restoreUp", "minimize", "restore", "close"].map((n) => (
          <ToolButton key={n} $w={30} aria-label={n}><Icon n={n} s={n === "close" ? 10 : 12} /></ToolButton>
        ))}
      </TitleBar>
      <TabBar>
        {tabs.map((t, i) => <Tab key={t} $on={i === 1}>{t}</Tab>)}
        <TabEnd><Icon n="help" s={14} /><Icon n="sync" s={15} /><Caret /></TabEnd>
      </TabBar>

      <Ribbon>
        <Group $w={483}>
          <GroupRow>
            <BigBtn n="importPage" w={58} label="输入(I)" caret />
            <BigBtn n="exportPage" w={60} label="输出(E)" caret />
            <BigBtn n="syncBig" w={74} label="发送到Sync" />
            <Rows w={204} items={[["cloudOpen", "打开远程文件(O)"], ["cloudSave", "远程保存文件(S)"], ["report", "Trimble Access工程报告生成器(J)"]]} />
            <BigBtn n="devices" w={78} label="设备面板(D)" />
          </GroupRow>
          <GroupName>数据交换</GroupName>
        </Group>
        <Group $w={620}>
          <GroupRow>
            <BigBtn n="funnelBig" w={134} label="视图过滤器管理器(M)" />
            <Stack $w={111}>
              <IconLine>{["zoomIn", "zoomOut", "extents", "lens", "lensPlus"].map((n) => <ToolButton key={n} $w={21} aria-label={n}><Icon n={n} s={14} /></ToolButton>)}</IconLine>
              <Combo>
                <select aria-label="视图过滤器"><option>我的过滤器</option></select>
                <span className="end"><Caret $c="#444" /></span>
              </Combo>
              <IconLine>{["center", "hand", "handPlus", "flag", "term"].map((n) => <ToolButton key={n} $w={21} aria-label={n}><Icon n={n} s={14} /></ToolButton>)}</IconLine>
            </Stack>
            <BigBtn n="planBig" w={48} label="俯视图" />
            <BigBtn n="boxBig" w={74} label="三维视窗" caret />
            <BigBtn n="cubeBig" w={44} label="顶" caret $dim />
            <Rows w={89} items={[["planeStar", "平面管理器"], ["section", "切面图"], ["cube", "盒状显示", 1]]} />
            <Rows w={108} items={[["picture", "测站浏览"], ["earth", "Google Earth(G)"], ["history", "历史日志视图"]]} />
          </GroupRow>
          <GroupName>视图</GroupName>
        </Group>
        <Group $w={331} $pad={5}>
          <GroupRow>
            <BigBtn n="managerBig" w={90} label="工程管理器(E)" $on />
            <Rows w={51} items={[["point", "点"], ["occupy", "占用"], ["optic", "光学"]]} />
            <Rows w={66} items={[["camera", "摄像点"], ["vector", "矢量"], ["feature", "要素"]]} />
            <Rows w={114} items={[["lineAsk", "浏览对象(X)"], ["lineFilter", "过滤直线标记(F)"], ["measure", "测量距离(M)", 1]]} />
          </GroupRow>
          <GroupName>数据</GroupName>
        </Group>
        <Group $last>
          <GroupRow>
            <BigBtn n="ringsBig" w={94} label="选择管理器(X)" />
            <Rows w={105} items={[["selPoint", "选择点(P)"], ["selDup", "选择重复点(D)"], ["selElev", "按高程选择"]]} />
            <Rows w={115} items={[["selObs", "选择观测(O)"], ["selLayer", "按图层选择(L)"], ["selPoly", "按多边形选择(P)"]]} />
            <Rows w={88} items={[["selSame", "选择类似的"], ["selAdv", "高级选择(V)"], ["selInv", "反向选择(I)"]]} />
            <BigBtn n="allBig" w={60} label="全选(A)" />
          </GroupRow>
          <GroupName>选择</GroupName>
        </Group>
        <Scroller aria-label="向右滚动"><Caret /></Scroller>
        <RibbonEnd><button aria-label="折叠功能区"><Icon n="chevUp" s={12} /></button></RibbonEnd>
      </Ribbon>

      <Main>
        <Panel>
          <PanelHead>
            <Icon n="projectTree" s={14} />
            <h2>工程管理器</h2>
            <HeadButtons />
          </PanelHead>
          <Tree>
            <TreeItem><Twist /><Icon n="listBox" s={16} />未命名</TreeItem>
            <TreeItem $in={11}><Icon n="target" s={13} />点</TreeItem>
            <TreeItem $in={10} $on><Icon n="gold" />导入文件</TreeItem>
          </Tree>
        </Panel>

        <Panel $edge>
          <PanelHead $in={2}>
            <Icon n="note" s={12} />
            <h2>属性(P)</h2>
            <HeadButtons />
          </PanelHead>
          <Strip $pad={5}><Icon n="toggle" /><Icon n="dash" /></Strip>
          <ObjectHead><div><Icon n="gold" s={18} /></div>导入文件</ObjectHead>
          <PlainSelect>
            <select aria-label="对象"><option>导入文件（1）</option></select>
            <Icon n="chevDown" s={13} />
          </PlainSelect>
          <PropGrid>
            <header><button aria-label="折叠">−</button>统计数据</header>
            <label>文件数:<input value="0" readOnly /></label>
          </PropGrid>
          <HelpWrap><HelpBox /></HelpWrap>
        </Panel>

        <View>
          <ViewTabs>
            <ViewTab>俯视图 [我的过滤器]<Icon n="close" s={10} /></ViewTab>
          </ViewTabs>
          <PlanView />
        </View>

        <Panel $edge $flat>
          <PanelHead $in={9}>
            <Icon n="importPage" s={12} />
            <h2>输入(I)</h2>
            <HeadButtons />
          </PanelHead>
          <Strip>
            <Grip />
            <Icon n="filterGhost" />
            <Bar />
            <Icon n="term" s={14} />
            <Grip />
            <Icon n="pageLens" />
            <Icon n="importPage" s={12} />
            <Icon n="copy" s={15} />
          </Strip>
          <Section $top={6}>导入文件夹</Section>
          <PathRow>
            <PathCombo>
              <select aria-label="导入文件夹"><option>{"C:\\Users\\2023037\\Desktop\\0307\\RINEX"}</option></select>
              <span><Icon n="chevDown" s={11} /></span>
            </PathCombo>
            <Browse aria-label="浏览">...</Browse>
          </PathRow>
          <Section $top={11}>选择文件</Section>
          <Files>
            <FileTable>
              <colgroup><col width="17" /><col width="102" /><col width="103" /><col width="49" /></colgroup>
              <thead>
                <tr><th aria-label="图标" /><th>文件名</th><th>文件类型</th><th>File<br />Date</th></tr>
              </thead>
              <tbody>
                {files.map(([f, t], i) => (
                  <FileRow key={f} $on={i === 0}>
                    <td />
                    <td><Code>{f}</Code></td>
                    <td>{t === "RINEX" ? <Code>{t}</Code> : t}</td>
                    <td><Code>2025...</Code></td>
                  </FileRow>
                ))}
              </tbody>
            </FileTable>
            <ScrollBar><Icon n="chevUp" s={16} /><span /><Icon n="chevDown" s={16} /></ScrollBar>
          </Files>
          <FileInfo>
            <strong>HQ01066F.25O</strong>
            <span>RINEX</span>
            <span>{"2025/3/7 20:57:08  921 KB"}</span>
          </FileInfo>
          <CloseAfter><input type="checkbox" defaultChecked />在导入后关闭命令</CloseAfter>
          <Section $top={1}>设置<Icon n="twoUp" s={11} /></Section>
          <Settings>
            <tbody>
              <tr><th>强制静态:</th><td>不</td></tr>
              <tr><th>强制动态:</th><td>不</td></tr>
            </tbody>
          </Settings>
          <Actions><button>输入</button><button>关闭</button></Actions>
        </Panel>
      </Main>

      <Status>
        <Cell $w={20} $on><Icon n="snapBox" /></Cell>
        <Cell $w={20}><Icon n="snapPoly" /></Cell>
        <Cell $w={20}><Icon n="invert" /></Cell>
        <Cell $w={19} $on><Icon n="grid" /></Cell>
        <Cell $w={20}><Icon n="lineEye" /></Cell>
        <Cell $w={20}><Icon n="slopes" /></Cell>
        <Cell $w={21}><Icon n="ortho" /></Cell>
        <Cell $w={34} $line>捕捉</Cell>
        <Cell $w={21} $line><Icon n="world" /></Cell>
        <Cell $w={20} $line>米</Cell>
        <Cell $w={33} $line>格网</Cell>
        <Cell $w={47} $line>缺省的</Cell>
        <Cell $w={19} $line />
        <Cell $w={20} $line $mono>1</Cell>
        <Cell $w={20} $line><Icon n="boxDims" s={14} /></Cell>
        <Cell $w={150} $line $mono>40351.223 m,28576.529 m</Cell>
        <Cell $w={91} />
        <Cell $w={19} $line><Icon n="listGear" s={14} /></Cell>
      </Status>

      <Taskbar>
        <TaskButton aria-label="开始">
          <TaskIcon s={16}><path d="M0 3.500 10 2V11.500H0ZM11.500 1.800 24 0V11.500H11.500ZM0 13H10V22.500L0 21ZM11.500 13H24V24L11.500 22.300Z" fill="#fff" /></TaskIcon>
        </TaskButton>
        <TaskButton aria-label="搜索"><TaskIcon><circle cx="13" cy="9" r="7.500" fill="none" stroke="#fff" strokeWidth="2" /><path d="M7.500 14.500 .5 22" stroke="#fff" strokeWidth="2.500" /></TaskIcon></TaskButton>
        <TaskButton aria-label="任务视图"><TaskIcon s={17}><path d="M0 0V4H14V0M0 24V20H14V24M0 7H14V17H0ZM20 0V24" fill="none" stroke="#fff" strokeWidth="1.600" /><path d="M18 8H22V12H18Z" fill="#fff" /></TaskIcon></TaskButton>
        <TaskButton aria-label="Edge">
          <TaskIcon>
            <circle cx="12" cy="12" r="12" fill="#1277d4" />
            <path d="M0 12A12 12 0 0 1 24 11Q24 17 17 16 13 15 15 12 15 7 9 7 3 7 0 12Z" fill="#35c6d6" />
            <path d="M13 .5Q23 2 24 11 24 17 17 16 13 15 15 12 15 5 13 .5Z" fill="#58d36b" />
            <path d="M9 11Q7 19 15 20 19 20 22 18 18 24 12 24 4 22 5 15 6 11 9 11Z" fill="#0c4f9e" />
          </TaskIcon>
        </TaskButton>
        <TaskButton aria-label="文件资源管理器"><TaskIcon><path d="M1 3H10L12 6H23V21H1Z" fill="#ffd15c" /><path d="M1 3H10L11 6H1Z" fill="#e2a00f" /><path d="M5 13H19V21H15V17H9V21H5Z" fill="#3d94dc" /></TaskIcon></TaskButton>
        <TaskButton aria-label="G">
          <TaskIcon><rect width="24" height="24" rx="2" fill="#484f73" /><path d="M19 6A8.500 8.500 0 1 0 18 19M17 9A5.500 5.500 0 1 0 15 17" fill="none" stroke="#9ad0ec" strokeWidth="1.500" /><path d="M13 13H22M16 13V17M19 13V16H22" stroke="#9ad0ec" fill="none" /></TaskIcon>
        </TaskButton>
        <TaskButton $run aria-label="四叶草">
          <TaskIcon>
            <path d="M12 12Q4 13 1 9 0 4 6 5 6 0 10 1 13 5 12 12ZM12 12Q12 3 16 1 20 1 19 5 24 5 23 9 20 13 12 12ZM12 12Q20 12 22 16 22 19 18 19 17 23 14 21 11 18 12 12ZM12 12Q3 13 2 17 3 20 7 19 9 21 11 19Z" fill="#8fd14a" />
            <path d="M12 12Q7 16 3 23" stroke="#4f9a2b" strokeWidth="1.500" fill="none" />
          </TaskIcon>
        </TaskButton>
        <TaskButton $run aria-label="显示器"><TaskIcon><path d="M1 4H23V18H1Z" fill="#46a6e8" stroke="#1c2d3a" /><path d="M9 21H15L14 18H10Z" fill="#15191d" /></TaskIcon></TaskButton>
        <TaskButton $run aria-label="飞书"><TaskIcon><path d="M4 2H14Q18 5 18 9L12 12Q9 6 4 2Z" fill="#14d3bb" /><path d="M0 8Q7 16 15 13 20 9 24 8 21 14 18 18 12 24 4 22L0 19Z" fill="#3470f5" /><path d="M12 13Q18 7 24 8 20 17 14 15Z" fill="#133c9a" /></TaskIcon></TaskButton>
        <TaskButton $run $on aria-label="Trimble Business Center"><Icon n="logo" s={21} /></TaskButton>
        <Tray>
          <TrayItem aria-label="显示隐藏的图标"><Icon n="chevUp" s={14} /></TrayItem>
          <TrayItem aria-label="OneDrive"><TaskIcon s={18}><path d="M3 18A5 5 0 0 1 4 9 7 7 0 0 1 17 8 5 5 0 0 1 19 18Z" fill="#1483dc" /><circle cx="18" cy="17" r="6" fill="#1a76cc" stroke="#d9ecfb" /><path d="M15 16A3 3 0 0 1 21 16M21 18A3 3 0 0 1 15 18" fill="none" stroke="#fff" strokeWidth="1.500" /></TaskIcon></TrayItem>
          <TrayItem>31</TrayItem>
          <TrayItem $w={25} aria-label="网络"><TaskIcon s={16}><path d="M6 4H23V17H6M14 17V22M9 22H20M1 2H7V9H1ZM4 9V22H8" fill="none" stroke="#fff" strokeWidth="1.600" /></TaskIcon></TrayItem>
          <TrayItem aria-label="C"><TaskIcon s={15}><circle cx="12" cy="12" r="11" fill="#2d7de0" /><path d="M17 6A8 8 0 1 0 19 14M15 9A4.500 4.500 0 1 0 16 14" fill="none" stroke="#fff" strokeWidth="2" /></TaskIcon></TrayItem>
          <TrayItem aria-label="火绒"><TaskIcon s={16}><path d="M2 4Q8 4 12 0 16 4 22 4V13Q20 20 12 24 4 20 2 13Z" fill="#ff9d16" /><path d="M7 17Q9 8 17 4 15 9 17 12 16 18 11 20 11 16 7 17Z" fill="#fff" /></TaskIcon></TrayItem>
          <TrayItem aria-label="音量"><TaskIcon s={16}><path d="M1 8H5L10 3V21L5 16H1Z" fill="none" stroke="#fff" strokeWidth="1.600" /><path d="M13 8Q16 12 13 16M17 6Q21 12 17 18" fill="none" stroke="#fff" strokeWidth="1.600" /><path d="M21 4Q26 12 21 20" fill="none" stroke="#8b969d" strokeWidth="1.600" /></TaskIcon></TrayItem>
          <TrayItem aria-label="安全网络"><TaskIcon s={17}><circle cx="11" cy="12" r="11" fill="#5da9df" /><path d="M11 1Q2 12 11 23M2 8H20" fill="none" stroke="#dcefff" strokeWidth="1.500" /><path d="M11 11H23V23H11Z" fill="#d6ae5a" /><path d="M14 11V7Q17 3 20 7V11" fill="none" stroke="#e6cf96" strokeWidth="2" /></TaskIcon></TrayItem>
          <TrayItem aria-label="飞书"><TaskIcon s={16}><circle cx="12" cy="12" r="12" fill="#fff" /><path d="M8 5H14L17 10 13 12Z" fill="#14d3bb" /><path d="M3 9Q10 15 20 10 17 19 10 19 5 18 3 14Z" fill="#2b62ea" /></TaskIcon></TrayItem>
          <TrayItem $w={22} $f={16}>英</TrayItem>
          <TrayItem $w={36}><Pinyin>拼</Pinyin></TrayItem>
          <Clock>20:59<br />2025/3/7</Clock>
          <TrayItem $w={49} aria-label="通知">
            <TaskIcon><path d="M0 1H16V15H7L3 19V15H0Z" fill="#fff" /><path d="M3 5H13M3 8H13M3 11H10" stroke="#283945" strokeWidth="1.300" /><circle cx="15" cy="17" r="7.500" fill="#3a444c" stroke="#87919a" /><text x="15" y="21" textAnchor="middle" fontSize="12" fontFamily="Open Sans" fill="#fff">1</text></TaskIcon>
          </TrayItem>
        </Tray>
      </Taskbar>

      <Marks viewBox="0 0 1917 1080" aria-hidden="true">
        <rect x="9" y="51" width="56" height="66" fill="none" stroke="#ed1c24" strokeWidth="2" />
        <g stroke="#ed1c24" strokeWidth="5" strokeLinecap="round" fill="#ed1c24">
          <path d="M74 108 1606 235" />
          <path d="M1618 748 1752 972" />
          <path d="M1624 237 1605 228 1607 236 1604 244ZM1760 988 1743 975 1752 973 1757 968Z" strokeWidth="0" />
        </g>
      </Marks>
    </Window>
  );
}
